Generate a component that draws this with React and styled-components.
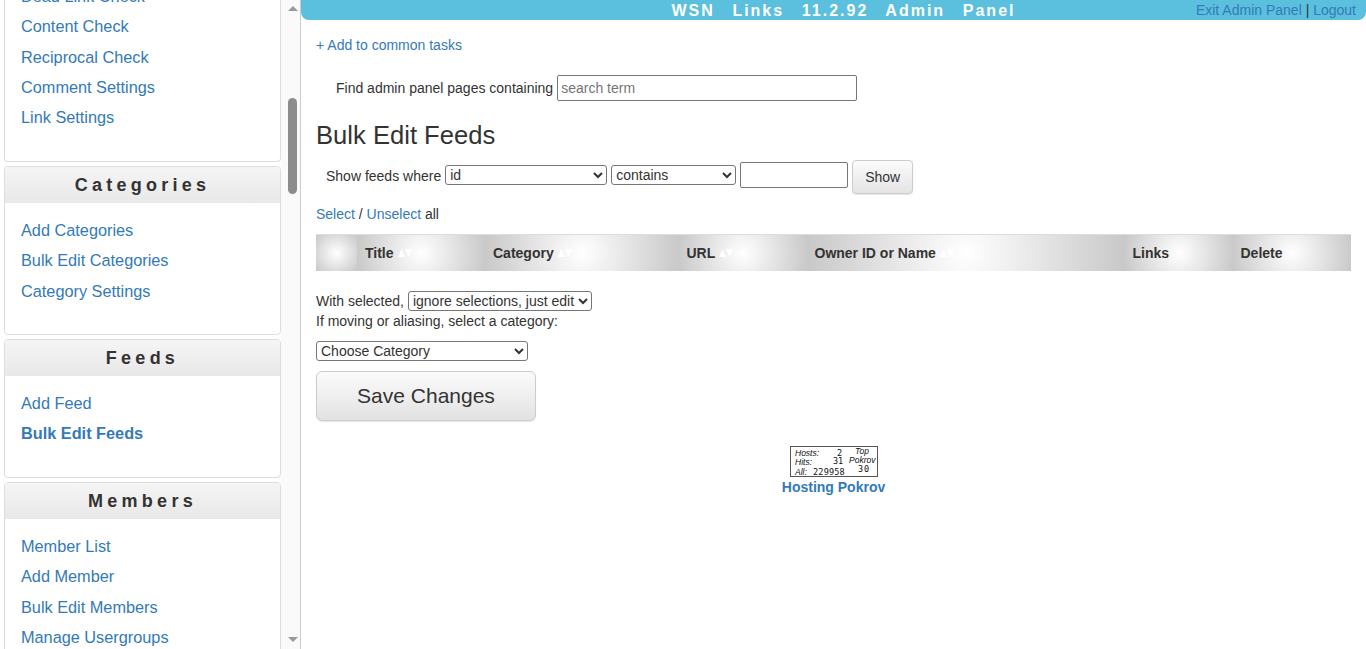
import { createGlobalStyle, styled } from "styled-components";

const sections = [
  { id: "links", links: ["Dead Link Check", "Content Check", "Reciprocal Check", "Comment Settings", "Link Settings"] },
  { id: "categories", title: "Categories", links: ["Add Categories", "Bulk Edit Categories", "Category Settings"] },
  { id: "feeds", title: "Feeds", links: ["Add Feed", "Bulk Edit Feeds"], current: "Bulk Edit Feeds" },
  { id: "members", title: "Members", links: ["Member List", "Add Member", "Bulk Edit Members", "Manage Usergroups"] },
];

const columns = [
  { label: "", width: 41 },
  { label: "Title", width: 128, sort: true },
  { label: "Category", width: 193.5, sort: true },
  { label: "URL", width: 128, sort: true },
  { label: "Owner ID or Name", width: 318, sort: true },
  { label: "Links", width: 108 },
  { label: "Delete", width: 118.5 },
];

function SortArrows() {
  return (
    <ArrowIcon viewBox="0 0 14 8" aria-hidden="true">
      <path d="M0 8 L3.5 0 L7 8 Z" fill="#fff" />
      <path d="M7 0 L14 0 L10.5 8 Z" fill="#fff" />
    </ArrowIcon>
  );
}

function CounterBadge() {
  return (
    <Counter viewBox="0 0 88 31" role="img" aria-label="Hosting Pokrov counter">
      <rect x="0.5" y="0.5" width="87" height="30" fill="#fff" stroke="#555" />
      <g fontFamily="'Liberation Sans', sans-serif" fontSize="8.5" fontStyle="italic" fill="#111">
        <text x="5" y="9.5">Hosts:</text>
        <text x="5" y="18.5">Hits:</text>
        <text x="5" y="28.5">All:</text>
        <text x="65" y="8">Top</text>
        <text x="59" y="17">Pokrov</text>
      </g>
      <g fontFamily="'DejaVu Sans Mono', monospace" fontSize="8.5" fill="#111">
        <text x="47" y="9.5">2</text>
        <text x="43" y="18">31</text>
        <text x="23" y="28.5" letterSpacing="0.2">229958</text>
        <text x="68" y="26" letterSpacing="1">30</text>
      </g>
    </Counter>
  );
}

export default function App() {
  return (
    <>
      <GlobalStyle />
      <Page>
        <Sidebar>
          <PanelColumn>
            {sections.map((section) => (
              <Panel key={section.id} $headless={!section.title}>
                {section.title && <PanelHeader>{section.title}</PanelHeader>}
                <PanelBody>
                  {section.links.map((link) => (
                    <PanelLink key={link} href="#" $current={link === section.current}>
                      {link}
                    </PanelLink>
                  ))}
                </PanelBody>
              </Panel>
            ))}
          </PanelColumn>
          <Scrollbar>
            <ScrollArrow $up />
            <ScrollThumb />
            <ScrollArrow />
          </Scrollbar>
        </Sidebar>

        <Main>
          <TopBar>
            <BarTitle>WSN Links 11.2.92 Admin Panel</BarTitle>
            <BarLinks>
              <a href="#">Exit Admin Panel</a> | <a href="#">Logout</a>
            </BarLinks>
          </TopBar>

          <Content>
            <CommonTask href="#">+ Add to common tasks</CommonTask>

            <SearchRow>
              Find admin panel pages containing
              <SearchInput placeholder="search term" />
            </SearchRow>

            <Heading>Bulk Edit Feeds</Heading>

            <FilterRow>
              <FilterLabel>Show feeds where</FilterLabel>
              <FilterSelect $width={162}>
                <option>id</option>
              </FilterSelect>
              <FilterSelect $width={125}>
                <option>contains</option>
              </FilterSelect>
              <FilterInput />
              <ShowButton>Show</ShowButton>
            </FilterRow>

            <SelectLine>
              <a href="#">Select</a> / <a href="#">Unselect</a> all
            </SelectLine>

            <HeaderRow>
              {columns.map((col) => (
                <HeaderCell key={col.label || "check"} $width={col.width}>
                  {col.label}
                  {col.sort && <SortArrows />}
                </HeaderCell>
              ))}
            </HeaderRow>

            <WithSelected>
              With selected,{" "}
              <Select>
                <option>ignore selections, just edit</option>
              </Select>
            </WithSelected>
            <MoveNote>If moving or aliasing, select a category:</MoveNote>

            <Select $width={212}>
              <option>Choose Category</option>
            </Select>

            <SaveButton>Save Changes</SaveButton>

            <Footer>
              <CounterBadge />
              <FooterLink href="#">Hosting Pokrov</FooterLink>
            </Footer>
          </Content>
        </Main>
      </Page>
    </>
  );
}

const GlobalStyle = createGlobalStyle`
  html, body {
    margin: 0;
    height: 100%;
    overflow: hidden;
    background: #fff;
  }
  body {
    font-family: "Liberation Sans", Arial, sans-serif;
    font-size: 14px;
    color: #333;
  }
  a {
    color: #337ab7;
    text-decoration: none;
  }
`;

const Page = styled.div`
  display: flex;
  height: 649px;
  overflow: hidden;
`;

const Sidebar = styled.aside`
  flex: 0 0 301px;
  display: flex;
  border-right: 1px solid #ccc;
  box-sizing: border-box;
  overflow: hidden;
`;

const PanelColumn = styled.div`
  flex: 0 0 281px;
  box-sizing: border-box;
  padding-left: 4px;
  margin-top: -32.2px;
  display: flex;
  flex-direction: column;
  gap: 4px;
`;

const Panel = styled.section`
  flex: none;
  border: 1px solid #ddd;
  border-top-color: ${(p) => (p.$headless ? "transparent" : "#ddd")};
  border-radius: 4px;
  background: #fff;
`;

const PanelHeader = styled.h3`
  margin: 0;
  height: 36px;
  line-height: 36px;
  text-align: center;
  font-size: 18px;
  font-weight: bold;
  letter-spacing: 4.25px;
  color: #333;
  background: linear-gradient(#f5f5f5, #e8e8e8);
  border-radius: 3px 3px 0 0;
`;

const PanelBody = styled.nav`
  padding: 12px 16px 28px;
  display: flex;
  flex-direction: column;
`;

const PanelLink = styled.a`
  height: 30.4px;
  line-height: 30.4px;
  font-size: 16.3px;
  font-weight: ${(p) => (p.$current ? "bold" : "normal")};
`;

const Scrollbar = styled.div`
  flex: 1;
  position: relative;
  background: #fafafa;
`;

const ScrollArrow = styled.span`
  position: absolute;
  left: 7px;
  width: 0;
  height: 0;
  border-left: 5px solid transparent;
  border-right: 5px solid transparent;
  ${(p) =>
    p.$up
      ? "top: 6px; border-bottom: 5px solid #999;"
      : "bottom: 7px; border-top: 5px solid #999;"}
`;

const ScrollThumb = styled.span`
  position: absolute;
  left: 7px;
  top: 98px;
  width: 9px;
  height: 96px;
  border-radius: 5px;
  background: #8c8c8c;
`;

const Main = styled.main`
  flex: 1;
  min-width: 0;
  display: flex;
  flex-direction: column;
`;

const TopBar = styled.header`
  flex: 0 0 20px;
  display: flex;
  align-items: flex-start;
  background: #5bc0de;
  border-radius: 0 0 8px 8px;
  line-height: 20px;
`;

const BarTitle = styled.div`
  flex: 1;
  padding-left: 190px;
  text-align: center;
  color: #fff;
  font-size: 16px;
  line-height: 22px;
  height: 20px;
  font-weight: bold;
  letter-spacing: 2px;
  word-spacing: 11.2px;
  white-space: nowrap;
`;

const BarLinks = styled.div`
  padding-right: 10px;
  white-space: nowrap;
  color: #333;
`;

const Content = styled.div`
  padding: 0 15px;
  display: flex;
  flex-direction: column;
  align-items: flex-start;
`;

const CommonTask = styled.a`
  margin-top: 17px;
  line-height: 16px;
`;

const SearchRow = styled.div`
  margin-top: 22px;
  padding-left: 20px;
  display: flex;
  align-items: center;
  gap: 4px;
`;

const SearchInput = styled.input`
  width: 300px;
  height: 26px;
  box-sizing: border-box;
  padding: 1px 3px;
  border: 1px solid #767676;
  border-radius: 2px;
  font: 14px "Liberation Sans", Arial, sans-serif;
  &::placeholder {
    color: #757575;
  }
`;

const Heading = styled.h1`
  margin: 20px 0 0;
  font-size: 25.6px;
  line-height: 28px;
  font-weight: normal;
  color: #333;
`;

const FilterRow = styled.div`
  margin-top: 11px;
  padding-left: 10px;
  display: flex;
  align-items: center;
  gap: 4px;
`;

const FilterLabel = styled.span`
  margin-bottom: 2px;
`;

const Select = styled.select`
  width: ${(p) => (p.$width ? `${p.$width}px` : "auto")};
  height: 20px;
  box-sizing: border-box;
  border: 1px solid #767676;
  border-radius: 3px;
  background-color: #fff;
  color: #333;
  font: 14px "Liberation Sans", Arial, sans-serif;
`;

const FilterSelect = styled(Select)`
  margin-bottom: 4px;
`;

const FilterInput = styled.input`
  width: 108px;
  height: 26px;
  box-sizing: border-box;
  border: 1px solid #767676;
  border-radius: 2px;
  margin-bottom: 4px;
`;

const ShowButton = styled.button`
  width: 61px;
  height: 34px;
  box-sizing: border-box;
  border: 1px solid #ccc;
  border-radius: 4px;
  background: linear-gradient(#fbfbfb, #e4e4e4);
  box-shadow: 0 1px 1px rgba(0, 0, 0, 0.1);
  color: #333;
  font: 14px "Liberation Sans", Arial, sans-serif;
`;

const SelectLine = styled.div`
  margin-top: 12px;
  line-height: 16px;
`;

const HeaderRow = styled.div`
  margin-top: 12px;
  display: flex;
  width: 1035px;
  height: 37px;
  border-top: 1px solid #ddd;
  box-sizing: border-box;
`;

const HeaderCell = styled.div`
  flex: 0 0 ${(p) => p.$width}px;
  box-sizing: border-box;
  padding-left: 8px;
  display: flex;
  align-items: center;
  font-weight: bold;
  color: #333;
  background: radial-gradient(circle at center, #fff 0%, #c8c8c8 100%);
`;

const ArrowIcon = styled.svg`
  flex: none;
  width: 14px;
  height: 8px;
  margin-left: 4px;
`;

const WithSelected = styled.div`
  margin-top: 20px;
  display: flex;
  align-items: center;
  gap: 4px;
`;

const MoveNote = styled.div`
  margin: 1px 0 11px;
  line-height: 18px;
`;

const SaveButton = styled.button`
  margin-top: 10px;
  width: 220px;
  height: 50px;
  box-sizing: border-box;
  border: 1px solid #ccc;
  border-radius: 6px;
  background: linear-gradient(#fbfbfb, #e2e2e2);
  box-shadow: 0 1px 1px rgba(0, 0, 0, 0.1);
  color: #333;
  font: 21px "Liberation Sans", Arial, sans-serif;
`;

const Footer = styled.footer`
  margin-top: 25px;
  width: 1035px;
  display: flex;
  flex-direction: column;
  align-items: center;
`;

const Counter = styled.svg`
  width: 88px;
  height: 31px;
`;

const FooterLink = styled.a`
  margin-top: 2px;
  font-weight: bold;
`;
